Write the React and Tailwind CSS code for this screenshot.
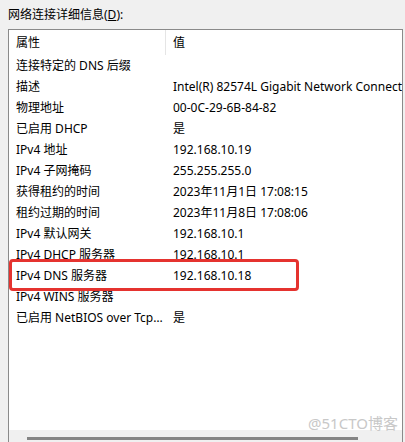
import React from "react";

const rows = [
  ["连接特定的 DNS 后缀", ""],
  ["描述", "Intel(R) 82574L Gigabit Network Connection"],
  ["物理地址", "00-0C-29-6B-84-82"],
  ["已启用 DHCP", "是"],
  ["IPv4 地址", "192.168.10.19"],
  ["IPv4 子网掩码", "255.255.255.0"],
  ["获得租约的时间", "2023年11月1日 17:08:15"],
  ["租约过期的时间", "2023年11月8日 17:08:06"],
  ["IPv4 默认网关", "192.168.10.1"],
  ["IPv4 DHCP 服务器", "192.168.10.1"],
  ["IPv4 DNS 服务器", "192.168.10.18"],
  ["IPv4 WINS 服务器", ""],
  ["已启用 NetBIOS over Tcpip", "是"],
];

export default function App() {
  return (
    <div
      className="relative w-[405px] h-[442px] overflow-hidden bg-[#f0f0f0] text-[12px] text-black"
      style={{ fontFamily: '"Noto Sans", "Noto Sans CJK SC", sans-serif' }}
    >
      <div className="h-[29px] pl-[8px] pt-[6px] leading-[17px]">
        网络连接详细信息(<span className="underline">D</span>):
      </div>
      <div className="ml-[8px] flex h-[420px] w-[395px] flex-col border border-[#8a8a8a] bg-white">
        <div className="flex h-[25px] shrink-0 items-center">
          <div className="h-full w-[156px] pl-[7px] leading-[25px]">属性</div>
          <div className="h-full w-px bg-[#e5e5e5]" />
          <div className="pl-[7px] leading-[25px]">值</div>
        </div>
        {rows.map(([k, v]) => (
          <div key={k} className="flex h-[21px] shrink-0 items-center leading-[21px]">
            <div className="w-[157px] shrink-0 truncate pl-[7px] pr-[3px]">{k}</div>
            <div className="min-w-0 flex-1 overflow-hidden whitespace-nowrap pl-[7px]">{v}</div>
          </div>
        ))}
        <div className="flex-1" />
        <div className="h-[18px] shrink-0 bg-[#f0f0f0] pt-[7px] pl-[18px]">
          <div className="h-[3px] w-[331px] bg-[#858585]" />
        </div>
      </div>
      <div className="absolute left-[9px] top-[259px] h-[32px] w-[290px] rounded-[4px] border-[3px] border-[#e5332f]" />
      <div className="absolute left-[308px] top-[413px] text-[15px] leading-[20px] text-[#c8c8c8]">
        @51CTO博客
      </div>
    </div>
  );
}
